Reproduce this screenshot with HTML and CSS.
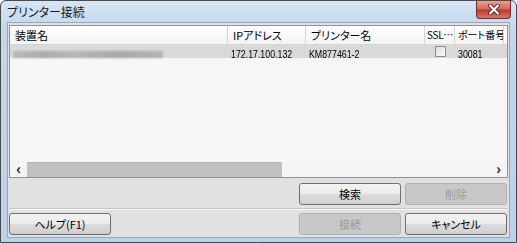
FILE: index.html
```html
<!DOCTYPE html>
<html lang="ja">
<head>
    <meta charset="UTF-8">
    <title>プリンター接続</title>
    <link rel="stylesheet" href="styles.css">
</head>
<body>
    <div class="window">
        <div class="titlebar">
            <span class="title">プリンター接続</span>
            <div class="close-btn">
                <svg width="14" height="11" viewBox="0 0 14 11">
                    <path d="M3 1.5 L11 9.5 M11 1.5 L3 9.5" stroke="#5a2222" stroke-width="4" stroke-linecap="round"/>
                    <path d="M3 1.5 L11 9.5 M11 1.5 L3 9.5" stroke="#ffffff" stroke-width="2.2" stroke-linecap="round"/>
                </svg>
            </div>
        </div>

        <div class="client">
            <!-- device list -->
            <div class="listview">
                <div class="lv-header">
                    <div class="col c1">装置名</div>
                    <div class="col c2">IPアドレス</div>
                    <div class="col c3">プリンター名</div>
                    <div class="col c4">SSL…</div>
                    <div class="col c5">ポート番号</div>
                </div>
                <div class="lv-row selected">
                    <div class="cell c1"><span class="blurred"></span></div>
                    <div class="cell c2"><span class="num">172.17.100.132</span></div>
                    <div class="cell c3"><span class="num">KM877461-2</span></div>
                    <div class="cell c4"><span class="checkbox"></span></div>
                    <div class="cell c5"><span class="num">30081</span></div>
                </div>
                <div class="lv-empty"></div>
                <div class="hscroll">
                    <div class="arrow">&lsaquo;</div>
                    <div class="thumb"></div>
                    <div class="track"></div>
                    <div class="arrow">&rsaquo;</div>
                </div>
            </div>

            <div class="btn-row right">
                <button class="btn">検索</button>
                <button class="btn" disabled>削除</button>
            </div>

            <div class="separator"></div>

            <div class="btn-row">
                <button class="btn">ヘルプ(F1)</button>
                <div class="btn-group">
                    <button class="btn" disabled>接続</button>
                    <button class="btn">キャンセル</button>
                </div>
            </div>
        </div>
    </div>
</body>
</html>
```

FILE: styles.css
```css
body {
    margin: 0;
    font-family: "Noto Sans CJK JP", "Liberation Sans", sans-serif;
    font-size: 11px;
    font-feature-settings: "palt";
    color: #000;
    background: #fff;
}
.window {
    width: 517px;
    height: 243px;
    box-sizing: border-box;
    border: 1px solid #4a4a4a;
    border-radius: 6px 6px 0 0;
    background: linear-gradient(#d7e5f5, #c3d6ec 30px, #bcd1ea);
    display: flex;
    flex-direction: column;
}
.titlebar {
    height: 21px;
    display: flex;
    align-items: flex-start;
    padding-left: 6px;
    padding-right: 5px;
}
.title {
    font-size: 12px;
    line-height: 22px;
    color: #1b1b1b;
}
.close-btn {
    margin-left: auto;
    width: 35px;
    height: 18px;
    box-sizing: border-box;
    border: 1px solid #6e2e2e;
    border-top: none;
    border-radius: 0 0 4px 4px;
    background: linear-gradient(#e8a08e, #d46a5c 45%, #c0392b 55%, #d8786a);
    display: flex;
    align-items: center;
    justify-content: center;
}
.client {
    flex: 1;
    margin: 0 6px 6px 6px;
    border: 1px solid #94a8c0;
    background: #e1e1e1;
    padding: 2px 1px 2px 1px;
    display: flex;
    flex-direction: column;
}
.listview {
    height: 151px;
    border: 1px solid #8e9299;
    background: #f6f6f6;
    display: flex;
    flex-direction: column;
}
.lv-header, .lv-row {
    display: flex;
}
.lv-header {
    height: 18px;
    background: linear-gradient(#ffffff, #f3f3f3);
    border-bottom: 1px solid #d5d5d5;
}
.col {
    box-sizing: border-box;
    border-right: 1px solid #d5d5d5;
    padding-left: 5px;
    line-height: 18px;
    white-space: nowrap;
    overflow: hidden;
}
.col.c4 {
    padding-left: 2px;
    font-size: 10px;
    letter-spacing: -0.3px;
}
.col.c5 {
    padding-left: 3px;
    font-size: 10px;
}
.c1 { width: 218px; }
.c2 { width: 78px; }
.c3 { width: 119px; }
.c4 { width: 30px; }
.c5 { width: 49px; }
.lv-row {
    height: 13px;
}
.lv-row.selected {
    background: #d9d9d9;
}
.cell {
    box-sizing: border-box;
    padding-left: 3px;
    white-space: nowrap;
}
.num {
    display: inline-block;
    font-family: "Liberation Sans", sans-serif;
    font-size: 11px;
    line-height: 13px;
    transform: scaleX(0.8);
    transform-origin: left center;
}
.blurred {
    display: inline-block;
    width: 150px;
    height: 7px;
    margin-top: 3px;
    background: linear-gradient(90deg, #bbb, #aaa 20%, #b8b8b8 40%, #a9a9a9 70%, #b4b4b4);
    filter: blur(1px);
}
.cell.c4 {
    display: flex;
    justify-content: center;
    align-items: center;
    padding-left: 0;
}
.checkbox {
    width: 9px;
    height: 9px;
    border: 1px solid #8f8f8f;
    background: linear-gradient(135deg, #dcdcdc, #fbfbfb);
}
.lv-empty {
    flex: 1;
}
.hscroll {
    height: 15px;
    display: flex;
    background: #f4f4f4;
}
.arrow {
    width: 17px;
    text-align: center;
    font-family: "Liberation Sans", sans-serif;
    font-size: 14px;
    font-weight: bold;
    line-height: 14px;
    color: #333;
}
.thumb {
    width: 255px;
    background: #c1c1c1;
    border-top: 1px solid #b4b4b4;
}
.track {
    flex: 1;
}
.btn-row {
    display: flex;
    justify-content: space-between;
    height: 22px;
    margin-top: 5px;
    padding-right: 1px;
}
.btn-row.right {
    justify-content: flex-end;
    gap: 4px;
}
.btn-group {
    display: flex;
    gap: 4px;
}
.separator {
    margin-top: 3px;
    height: 0;
    border-top: 1px solid #c6c6c6;
    border-bottom: 1px solid #f7f7f7;
}
.btn-row + .separator + .btn-row {
    margin-top: 3px;
}
.btn {
    width: 102px;
    height: 22px;
    border: 1px solid #707070;
    border-radius: 3px;
    background: linear-gradient(#f2f2f2, #ebebeb 50%, #dddddd 51%, #cfcfcf);
    font-family: inherit;
    font-size: 11px;
    font-feature-settings: "palt";
    color: #000;
    padding: 0;
}
.btn:disabled {
    border-color: #adb2b5;
    background: #c8c8c8;
    color: #9c9c9c;
}
```
